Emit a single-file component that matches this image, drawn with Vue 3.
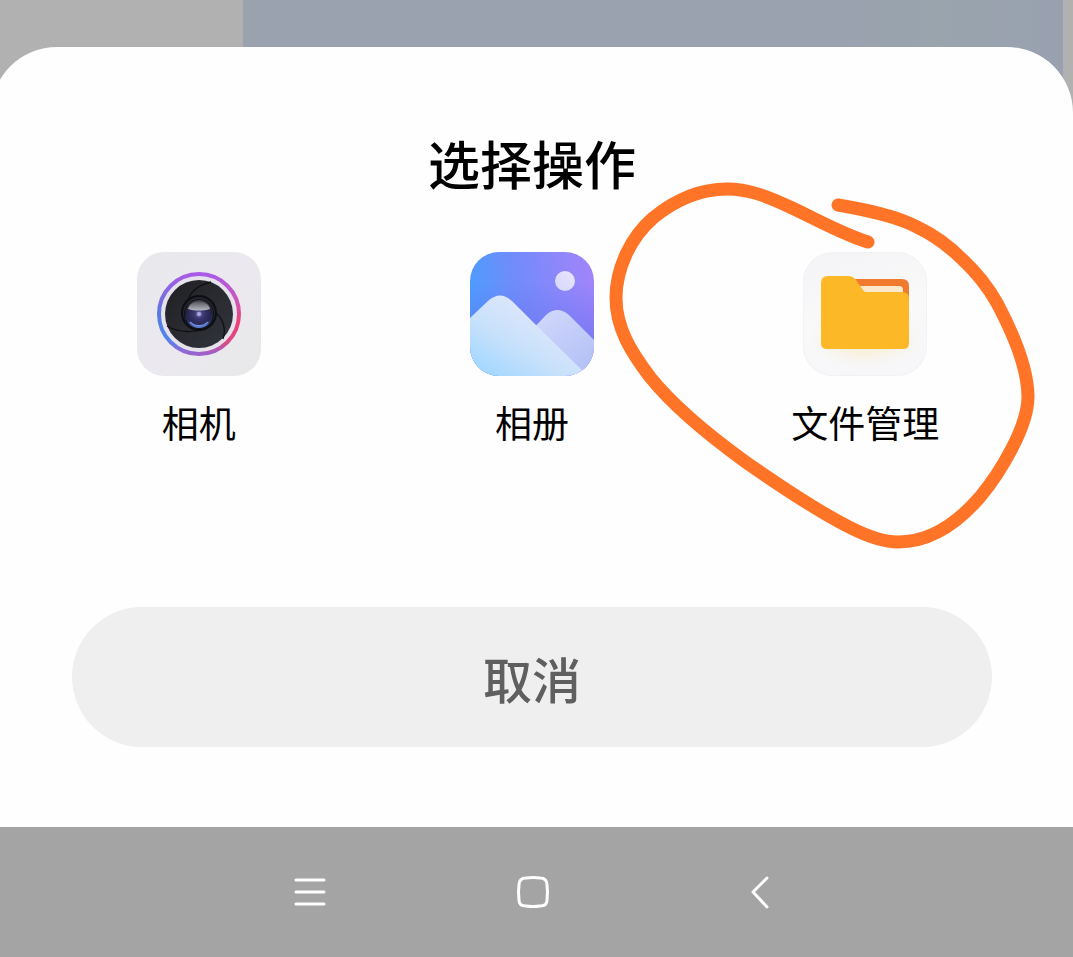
<template>
  <div class="screen">
    <div class="backdrop"><div class="bubble"></div></div>

    <main class="sheet">
      <h1 class="title">选择操作</h1>

      <div class="actions">
        <button type="button" class="action">
          <svg class="icon" viewBox="0 0 124 124" aria-hidden="true">
            <defs>
              <linearGradient id="camTile" x1="0" y1="0" x2="1" y2="1">
                <stop offset="0" stop-color="#e8e8eb" />
                <stop offset="0.5" stop-color="#ebe9ef" />
                <stop offset="1" stop-color="#e8e8e9" />
              </linearGradient>
              <linearGradient id="ringLeft" x1="0" y1="0" x2="0" y2="1">
                <stop offset="0" stop-color="#a95be6" />
                <stop offset="0.5" stop-color="#5878e2" />
                <stop offset="0.8" stop-color="#4f86ee" />
                <stop offset="1" stop-color="#9b62cf" />
              </linearGradient>
              <linearGradient id="ringRight" x1="0" y1="0" x2="0" y2="1">
                <stop offset="0" stop-color="#a95be6" />
                <stop offset="0.35" stop-color="#cf55b8" />
                <stop offset="0.6" stop-color="#ee4075" />
                <stop offset="0.85" stop-color="#dc4b83" />
                <stop offset="1" stop-color="#9b62cf" />
              </linearGradient>
              <linearGradient id="shutter" x1="0" y1="0" x2="1" y2="1">
                <stop offset="0" stop-color="#202023" />
                <stop offset="0.5" stop-color="#2a2b30" />
                <stop offset="1" stop-color="#30343c" />
              </linearGradient>
              <linearGradient id="lens" x1="0" y1="0" x2="0" y2="1">
                <stop offset="0" stop-color="#3b3b42" />
                <stop offset="0.45" stop-color="#20202e" />
                <stop offset="0.75" stop-color="#2a2d60" />
                <stop offset="1" stop-color="#5e86d8" />
              </linearGradient>
              <linearGradient id="glare" x1="0" y1="0" x2="0" y2="1">
                <stop offset="0" stop-color="#55555c" />
                <stop offset="1" stop-color="#b9b9c2" />
              </linearGradient>
              <radialGradient id="pupil">
                <stop offset="0" stop-color="#8f8dcc" />
                <stop offset="0.35" stop-color="#3a3972" />
                <stop offset="1" stop-color="#25244f" />
              </radialGradient>
            </defs>
            <rect width="124" height="124" rx="27" fill="url(#camTile)" />
            <circle cx="62" cy="62" r="38" fill="#e6e2ec" />
            <path d="M62 22a40 40 0 0 0 0 80" fill="none" stroke="url(#ringLeft)" stroke-width="4" />
            <path d="M62 22a40 40 0 0 1 0 80" fill="none" stroke="url(#ringRight)" stroke-width="4" />
            <circle cx="62" cy="62" r="34" fill="url(#shutter)" />
            <path
              d="M51 48C54 39 62 33 74 30M79 61C87 68 89 78 86 87M30 74C42 81 58 81 71 76"
              fill="none"
              stroke="#101013"
              stroke-width="1.3"
            />
            <circle cx="62" cy="61" r="18" fill="#0d0d12" />
            <circle cx="62" cy="61" r="16" fill="#24252d" />
            <circle cx="62" cy="62" r="15" fill="#111119" />
            <circle cx="62" cy="62" r="14" fill="url(#lens)" />
            <circle cx="62" cy="62" r="12" fill="url(#pupil)" />
            <path d="M51 57C53 47 71 47 73 57C66 59 58 59 51 57Z" fill="url(#glare)" />
            <circle cx="62" cy="62" r="2" fill="#aaa7dc" />
            <path d="M53 70C58 75 66 75 71 70" fill="none" stroke="#6d91df" stroke-width="1.5" />
          </svg>
          <span class="label">相机</span>
        </button>

        <button type="button" class="action">
          <svg class="icon" viewBox="0 0 124 124" aria-hidden="true">
            <defs>
              <clipPath id="tileClip"><rect width="124" height="124" rx="29" /></clipPath>
              <linearGradient id="sky" x1="0" y1="0.45" x2="1" y2="0.3">
                <stop offset="0" stop-color="#4c9cff" />
                <stop offset="0.4" stop-color="#728bfa" />
                <stop offset="1" stop-color="#a184fb" />
              </linearGradient>
              <linearGradient id="skyShade" x1="0" y1="0" x2="0" y2="1">
                <stop offset="0.25" stop-color="#6872ee" stop-opacity="0" />
                <stop offset="0.7" stop-color="#6872ee" stop-opacity="0.6" />
              </linearGradient>
              <linearGradient id="frontHill" x1="0.1" y1="0.9" x2="0.65" y2="0.3">
                <stop offset="0" stop-color="#a6d8ff" />
                <stop offset="0.5" stop-color="#c8e1fb" />
                <stop offset="1" stop-color="#dce6fb" />
              </linearGradient>
              <linearGradient id="backHill" x1="0" y1="0" x2="0.6" y2="1">
                <stop offset="0" stop-color="#d3d9fa" />
                <stop offset="1" stop-color="#b5c2f7" />
              </linearGradient>
              <linearGradient id="moon" x1="0" y1="1" x2="1" y2="0">
                <stop offset="0" stop-color="#d5d7fc" />
                <stop offset="1" stop-color="#ebe5ff" />
              </linearGradient>
            </defs>
            <g clip-path="url(#tileClip)">
              <rect width="124" height="124" fill="url(#sky)" />
              <rect width="124" height="124" fill="url(#skyShade)" />
              <circle cx="95" cy="29" r="10" fill="url(#moon)" />
              <path d="M60 80L76 63Q87 53 99 63L124 88V124H108Z" fill="url(#backHill)" />
              <path d="M0 66L18 49Q30 38 42 49L66 73L118 124H0Z" fill="url(#frontHill)" />
            </g>
          </svg>
          <span class="label">相册</span>
        </button>

        <button type="button" class="action">
          <svg class="icon" viewBox="0 0 124 124" aria-hidden="true">
            <defs>
              <linearGradient id="fileTile" x1="0" y1="0" x2="0.3" y2="1">
                <stop offset="0" stop-color="#f4f4f6" />
                <stop offset="0.6" stop-color="#f9f9fa" />
                <stop offset="1" stop-color="#f7f7f9" />
              </linearGradient>
              <radialGradient id="glow">
                <stop offset="0.5" stop-color="#f8f1de" />
                <stop offset="1" stop-color="#f8f5ec" stop-opacity="0" />
              </radialGradient>
            </defs>
            <rect x="0.5" y="0.5" width="123" height="123" rx="29" fill="url(#fileTile)" stroke="#f2f2f4" />
            <ellipse cx="62" cy="86" rx="58" ry="30" fill="url(#glow)" />
            <path d="M48 27H99Q106 27 106 34V52H48Z" fill="#f07b2f" />
            <path d="M54 34H96Q100 34 100 38V48H54Z" fill="#fde8cb" />
            <path
              d="M25 24H45Q50 24 53 28L60 38Q61 40 63 40H99Q106 40 106 47V91Q106 97 100 97H24Q18 97 18 91V31Q18 24 25 24Z"
              fill="#fdb827"
            />
          </svg>
          <span class="label">文件管理</span>
          <svg class="marker" viewBox="600 176 444 380" aria-hidden="true">
            <path
              d="M868 242C842 234 816 219 790 207C767 196 748 189 727 189C701 189 675 200 653 218C631 237 616 268 616 298C616 328 631 352 650 377C674 407 711 437 747 463C783 488 821 513 851 528C869 537 883 542 898 542C928 542 955 526 980 497C1000 473 1028 427 1028 397C1028 368 1013 333 997 303C988 287 976 272 963 260C950 247 934 235 917 227C897 216 867 210 838 205"
            />
          </svg>
        </button>
      </div>

      <button type="button" class="cancel">取消</button>
    </main>

    <nav class="navbar">
      <button type="button" class="key" aria-label="菜单">
        <svg viewBox="0 0 48 48"><path d="M11 12H39M11 24H39M11 36H39" /></svg>
      </button>
      <button type="button" class="key" aria-label="主页">
        <svg viewBox="0 0 48 48">
          <path d="M17 10Q24 9 31 10Q38 10 38 17Q39 24 38 32Q38 38 31 38Q24 39 17 38Q10 38 10 32Q9 24 10 17Q10 10 17 10Z" />
        </svg>
      </button>
      <button type="button" class="key" aria-label="返回">
        <svg viewBox="0 0 48 48"><path d="M34 10L20 24L34 39" /></svg>
      </button>
    </nav>
  </div>
</template>

<script setup>
</script>

<style>
body {
  margin: 0;
}
</style>

<style scoped>
.screen {
  position: relative;
  display: flex;
  flex-direction: column;
  min-height: 100vh;
  box-sizing: border-box;
  padding-top: 47px;
  overflow: hidden;
  background: #b1b1b1;
  font-family: "Noto Sans CJK SC", sans-serif;
}

.backdrop {
  position: absolute;
  inset: 0;
  padding: 0 10px 0 243px;
}

.bubble {
  height: 120px;
  background: linear-gradient(90deg, #9aa3ab, #9aa2af 12px, #9aa2af 70%, #99a4ad 85%, #99a1b0);
}

.sheet {
  position: relative;
  flex: 1;
  display: flex;
  flex-direction: column;
  margin-left: -9px;
  padding: 78px 41px 80px;
  border-radius: 66px 66px 0 0;
  background: #fefefe;
}

.title {
  margin: 0 0 51px;
  font-size: 52px;
  font-weight: 500;
  line-height: 76px;
  text-align: center;
  color: #000;
}

.actions {
  display: grid;
  grid-template-columns: repeat(3, 1fr);
}

button {
  border: 0;
  padding: 0;
  background: none;
  font-family: inherit;
  cursor: pointer;
}

.action {
  position: relative;
  display: flex;
  flex-direction: column;
  align-items: center;
  gap: 18px;
  color: #000;
}

.icon {
  width: 124px;
  height: 124px;
}

.label {
  font-size: 37px;
  line-height: 56px;
}

.marker {
  position: absolute;
  top: -76px;
  left: calc(50% - 265px);
  width: 444px;
  height: 380px;
  pointer-events: none;
}

.marker path {
  fill: none;
  stroke: #ff7426;
  stroke-width: 13;
  stroke-linecap: round;
  stroke-linejoin: round;
}

.cancel {
  height: 140px;
  margin: auto 40px 0;
  border-radius: 70px;
  background: #efefef;
  font-size: 49px;
  font-weight: 500;
  color: #5f5f5f;
}

.navbar {
  position: relative;
  display: flex;
  justify-content: center;
  align-items: center;
  gap: 176px;
  height: 130px;
  padding-right: 8px;
  background: #a4a4a4;
}

.key {
  display: flex;
}

.key svg {
  width: 48px;
  height: 48px;
  fill: none;
  stroke: #fff;
  stroke-width: 3;
  stroke-linecap: round;
  stroke-linejoin: round;
}
</style>
